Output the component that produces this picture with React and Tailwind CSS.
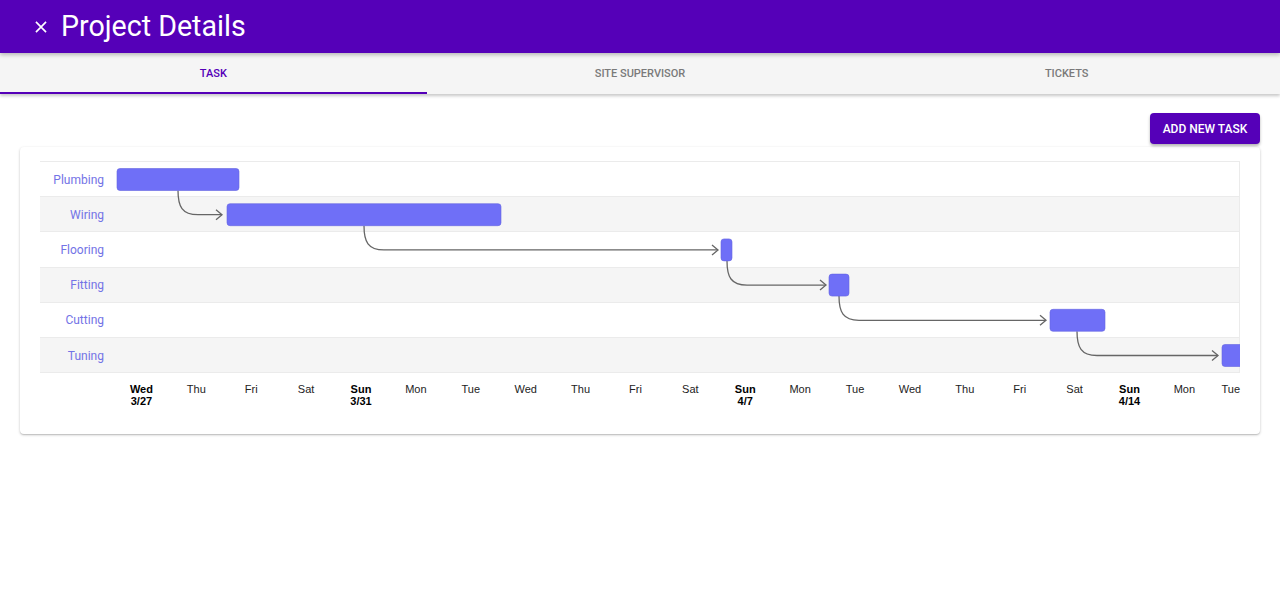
import React from 'react';

const tasks = [
  { name: 'Plumbing', x: 77, w: 122 },
  { name: 'Wiring', x: 187, w: 274 },
  { name: 'Flooring', x: 681, w: 11 },
  { name: 'Fitting', x: 789, w: 20 },
  { name: 'Cutting', x: 1010, w: 55 },
  { name: 'Tuning', x: 1182, w: 22 },
];

// dependency arrows: start x on parent bar bottom, tip x before child bar
const links = [
  { from: 0, x0: 138, tip: 182 },
  { from: 1, x0: 324, tip: 678 },
  { from: 2, x0: 687, tip: 786 },
  { from: 3, x0: 799, tip: 1006 },
  { from: 4, x0: 1037, tip: 1178 },
];

const days = [
  { d: 'Wed', date: '3/27' }, { d: 'Thu' }, { d: 'Fri' }, { d: 'Sat' },
  { d: 'Sun', date: '3/31' }, { d: 'Mon' }, { d: 'Tue' }, { d: 'Wed' },
  { d: 'Thu' }, { d: 'Fri' }, { d: 'Sat' }, { d: 'Sun', date: '4/7' },
  { d: 'Mon' }, { d: 'Tue' }, { d: 'Wed' }, { d: 'Thu' }, { d: 'Fri' },
  { d: 'Sat' }, { d: 'Sun', date: '4/14' }, { d: 'Mon' },
];

const ROW = 35.2;

const Gantt = () => {
  return (
    <div className="w-[1200px]">
      <div className="relative border-t border-r border-[#ebebeb]">
        {tasks.map((t, i) => (
          <div
            key={t.name}
            className={`flex h-[35.2px] border-b border-[#ebebeb] ${i % 2 === 1 ? 'bg-[#f5f5f5]' : 'bg-white'}`}
          >
            <div className="w-[74px] flex items-center justify-end pr-[10px] pt-px text-[12px] text-[#7373e6]">
              {t.name}
            </div>
          </div>
        ))}
        <svg
          className="absolute left-0 top-0 overflow-hidden"
          width="1200"
          height="212"
          viewBox="0 0 1200 212"
        >
          {links.map((l, i) => {
            const y0 = ROW * l.from + 6.5 + 22;
            const y1 = ROW * (l.from + 1) + 17.5;
            return (
              <g key={i} fill="none" stroke="#666" strokeWidth="1.3">
                <path d={`M${l.x0} ${y0} C${l.x0} ${y0 + 16}, ${l.x0 + 4} ${y1}, ${l.x0 + 20} ${y1} L${l.tip} ${y1}`} />
                <path d={`M${l.tip - 6} ${y1 - 5} L${l.tip} ${y1} L${l.tip - 6} ${y1 + 5}`} />
              </g>
            );
          })}
          {tasks.map((t, i) => (
            <rect
              key={t.name}
              x={t.x}
              y={ROW * i + 6.5}
              width={t.w}
              height="22"
              rx="3"
              fill="#6f6ff7"
              stroke="#6464e0"
              strokeWidth="0.6"
            />
          ))}
        </svg>
      </div>
      <div className="flex pl-[74px] pt-[10px] h-[49px] font-['Liberation_Sans',Arial,sans-serif] text-[11px] leading-[12px] text-[#222]">
        {days.map((day, i) => (
          <div key={i} className={`w-[54.9px] shrink-0 text-center ${day.date ? 'font-bold text-black' : ''}`}>
            <div>{day.d}</div>
            {day.date && <div>{day.date}</div>}
          </div>
        ))}
        <div className="flex-1 text-right">Tue</div>
      </div>
    </div>
  );
};

const App = () => {
  return (
    <div className="min-h-[599px] bg-white font-['Roboto',sans-serif]">
      <div className="relative z-20 h-[53px] bg-[#5500b8] flex items-center pl-[30px] text-white shadow-[0_2px_4px_rgba(0,0,0,0.25)]">
        <svg width="22" height="22" viewBox="0 0 24 24" className="mr-[9px]">
          <path d="M6.5 6.5 L17.5 17.5 M17.5 6.5 L6.5 17.5" stroke="white" strokeWidth="1.8" fill="none" />
        </svg>
        <span className="text-[28.6px] leading-none">Project Details</span>
      </div>
      <div className="relative z-10 flex h-[41px] bg-[#f5f5f5] shadow-[0_2px_3px_rgba(0,0,0,0.22)]">
        <div className="flex-1 flex items-center justify-center pt-[4px] text-[11px] font-medium text-[#5500b8] border-b-2 border-[#5500b8]">
          TASK
        </div>
        <div className="flex-1 flex items-center justify-center pb-[2px] pt-[4px] text-[11px] font-medium text-[#7a7a7a]">
          SITE SUPERVISOR
        </div>
        <div className="flex-1 flex items-center justify-center pb-[2px] pt-[4px] text-[11px] font-medium text-[#7a7a7a]">
          TICKETS
        </div>
      </div>
      <div className="px-[20px] pt-[19px]">
        <div className="flex justify-end">
          <button className="h-[31px] w-[110px] rounded-[4px] bg-[#5500b8] text-white text-[12px] font-medium shadow-[0_2px_3px_rgba(0,0,0,0.3)]">
            ADD NEW TASK
          </button>
        </div>
        <div className="mt-[3px] rounded-[4px] bg-white pt-[14px] px-[20px] pb-[12px] shadow-[0_1px_3px_rgba(0,0,0,0.2),0_1px_1px_rgba(0,0,0,0.12)]">
          <Gantt />
        </div>
      </div>
    </div>
  );
};

export default App;
